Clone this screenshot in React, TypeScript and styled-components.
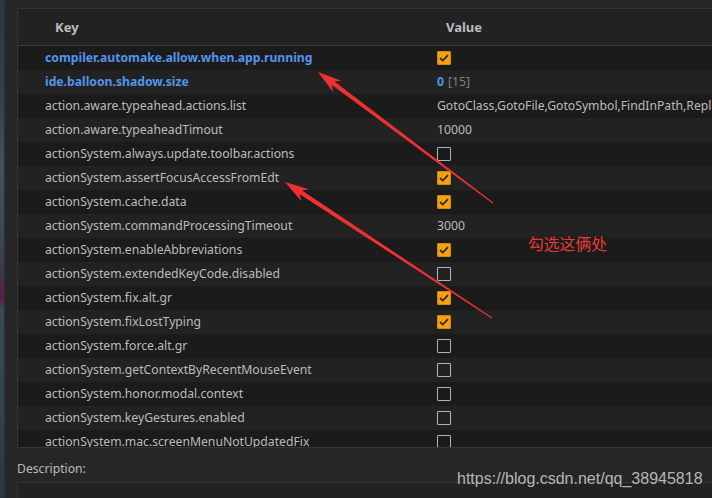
import React from 'react';
import styled, { createGlobalStyle } from 'styled-components';

const GlobalStyle = createGlobalStyle`
  html, body {
    margin: 0;
    padding: 0;
    background: #262626;
    overflow: hidden;
  }
  body {
    font-family: 'Noto Sans', 'Open Sans', sans-serif;
  }
`;

type Value =
  | { kind: 'check'; on: boolean }
  | { kind: 'text'; text: string }
  | { kind: 'size' };

type Row = { key: string; modified?: boolean; value: Value };

const rows: Row[] = [
  { key: 'compiler.automake.allow.when.app.running', modified: true, value: { kind: 'check', on: true } },
  { key: 'ide.balloon.shadow.size', modified: true, value: { kind: 'size' } },
  {
    key: 'action.aware.typeahead.actions.list',
    value: { kind: 'text', text: 'GotoClass,GotoFile,GotoSymbol,FindInPath,ReplaceInPath' },
  },
  { key: 'action.aware.typeaheadTimout', value: { kind: 'text', text: '10000' } },
  { key: 'actionSystem.always.update.toolbar.actions', value: { kind: 'check', on: false } },
  { key: 'actionSystem.assertFocusAccessFromEdt', value: { kind: 'check', on: true } },
  { key: 'actionSystem.cache.data', value: { kind: 'check', on: true } },
  { key: 'actionSystem.commandProcessingTimeout', value: { kind: 'text', text: '3000' } },
  { key: 'actionSystem.enableAbbreviations', value: { kind: 'check', on: true } },
  { key: 'actionSystem.extendedKeyCode.disabled', value: { kind: 'check', on: false } },
  { key: 'actionSystem.fix.alt.gr', value: { kind: 'check', on: true } },
  { key: 'actionSystem.fixLostTyping', value: { kind: 'check', on: true } },
  { key: 'actionSystem.force.alt.gr', value: { kind: 'check', on: false } },
  { key: 'actionSystem.getContextByRecentMouseEvent', value: { kind: 'check', on: false } },
  { key: 'actionSystem.honor.modal.context', value: { kind: 'check', on: false } },
  { key: 'actionSystem.keyGestures.enabled', value: { kind: 'check', on: false } },
  { key: 'actionSystem.mac.screenMenuNotUpdatedFix', value: { kind: 'check', on: false } },
];

const Page = styled.div`
  position: relative;
  display: flex;
  width: 712px;
  height: 498px;
  overflow: hidden;
`;

const Backdrop = styled.div`
  flex: 0 0 4px;
  background: linear-gradient(
    180deg,
    #2c3640 0%,
    #33414c 20%,
    #46505a 34%,
    #3a4650 48%,
    #3c3646 56%,
    #5e1d4c 58%,
    #5a1e48 60%,
    #3a4a52 62%,
    #34444c 80%,
    #2a3540 100%
  );
`;

const Dialog = styled.div`
  flex: 1;
  display: flex;
  flex-direction: column;
  padding: 8px 0 0 12px;
  background: #262626;
  border-left: 1px solid #333;
`;

const Table = styled.div`
  height: 438px;
  border: 1px solid #353535;
  border-right: none;
  background: #1c1c1c;
  overflow: hidden;
  display: flex;
  flex-direction: column;
`;

const HeaderRow = styled.div`
  flex: 0 0 36px;
  display: grid;
  grid-template-columns: 418px 1fr;
  align-items: center;
  background: #222222;
  border-bottom: 1px solid #3b3b3b;
`;

const HeaderCell = styled.div<{ $pad: number }>`
  padding-left: ${(p) => p.$pad}px;
  color: #b9bcc0;
  font-size: 13px;
  font-weight: 700;
`;

const Body = styled.div`
  flex: 1;
  overflow: hidden;
`;

const DataRow = styled.div<{ $odd: boolean }>`
  height: 24px;
  display: grid;
  grid-template-columns: 418px 1fr;
  align-items: center;
  background: ${(p) => (p.$odd ? '#1b1b1b' : '#222222')};
`;

const KeyCell = styled.div<{ $modified?: boolean }>`
  padding-left: 27px;
  padding-bottom: 1px;
  white-space: nowrap;
  font-size: 12.2px;
  font-weight: ${(p) => (p.$modified ? 700 : 400)};
  color: ${(p) => (p.$modified ? '#5394ec' : '#bbbbbb')};
`;

const ValueCell = styled.div`
  padding-left: 1px;
  padding-bottom: 1px;
  white-space: nowrap;
  font-size: 12.2px;
  color: #bbbbbb;
  display: flex;
  align-items: center;
  gap: 4px;
`;

const Strong = styled.span`
  color: #5394ec;
  font-weight: 700;
`;

const Muted = styled.span`
  color: #808080;
`;

const Box = styled.span<{ $on: boolean }>`
  width: 14px;
  height: 14px;
  box-sizing: border-box;
  border-radius: 1px;
  display: inline-flex;
  align-items: center;
  justify-content: center;
  background: ${(p) => (p.$on ? '#f5a00c' : 'transparent')};
  border: 1px solid ${(p) => (p.$on ? '#c98a10' : '#a8b6be')};
`;

const DescLabel = styled.div`
  margin-top: 12px;
  height: 18px;
  font-size: 12.2px;
  color: #b9bcc0;
`;

const DescBox = styled.div`
  margin-top: 4px;
  flex: 1;
  border-top: 1px solid #353535;
  border-left: 1px solid #353535;
  background: #222222;
`;

const Watermark = styled.div`
  position: absolute;
  left: 457px;
  top: 470px;
  font-family: 'Liberation Sans', Arial, sans-serif;
  font-size: 16px;
  color: rgba(220, 220, 220, 0.8);
  white-space: nowrap;
`;

const Note = styled.div`
  position: absolute;
  left: 528px;
  top: 232px;
  font-family: 'Noto Sans CJK SC', sans-serif;
  font-size: 15.8px;
  color: #e83a34;
  white-space: nowrap;
`;

const Overlay = styled.svg`
  position: absolute;
  left: 0;
  top: 0;
  pointer-events: none;
`;

const CheckBox = ({ on }: { on: boolean }) => (
  <Box $on={on}>
    {on && (
      <svg width="10" height="8" viewBox="0 0 10 8">
        <path d="M1 4 L3.8 6.6 L9 1.2" fill="none" stroke="#2a2a2a" strokeWidth="1.8" />
      </svg>
    )}
  </Box>
);

const renderValue = (v: Value) => {
  if (v.kind === 'check') return <CheckBox on={v.on} />;
  if (v.kind === 'size')
    return (
      <>
        <Strong>0</Strong>
        <Muted>[15]</Muted>
      </>
    );
  return <span>{v.text}</span>;
};

// tapered annotation arrow from tail to tip
const arrowPoints = (tx: number, ty: number, px: number, py: number) => {
  const dx = px - tx;
  const dy = py - ty;
  const len = Math.hypot(dx, dy);
  const ux = dx / len;
  const uy = dy / len;
  const nx = -uy;
  const ny = ux;
  const headLen = 24;
  const bx = px - ux * headLen;
  const by = py - uy * headLen;
  const nbx = px - ux * (headLen - 5);
  const nby = py - uy * (headLen - 5);
  const pts = [
    [tx + nx * 0.5, ty + ny * 0.5],
    [nbx + nx * 2.2, nby + ny * 2.2],
    [bx + nx * 7, by + ny * 7],
    [px, py],
    [bx - nx * 7, by - ny * 7],
    [nbx - nx * 2.2, nby - ny * 2.2],
    [tx - nx * 0.5, ty - ny * 0.5],
  ];
  return pts.map((p) => p.map((n) => n.toFixed(1)).join(',')).join(' ');
};

const App = () => (
  <Page>
    <GlobalStyle />
    <Backdrop />
    <Dialog>
      <Table>
        <HeaderRow>
          <HeaderCell $pad={37}>Key</HeaderCell>
          <HeaderCell $pad={10}>Value</HeaderCell>
        </HeaderRow>
        <Body>
          {rows.map((r, i) => (
            <DataRow key={r.key} $odd={i % 2 === 0}>
              <KeyCell $modified={r.modified}>{r.key}</KeyCell>
              <ValueCell>{renderValue(r.value)}</ValueCell>
            </DataRow>
          ))}
        </Body>
      </Table>
      <DescLabel>Description:</DescLabel>
      <DescBox />
    </Dialog>
    <Note>勾选这俩处</Note>
    <Watermark>https://blog.csdn.net/qq_38945818</Watermark>
    <Overlay width="712" height="498" viewBox="0 0 712 498">
      <polygon points={arrowPoints(493, 203, 318, 72)} fill="#ef3030" />
      <polygon points={arrowPoints(492, 318, 285, 182)} fill="#ef3030" />
    </Overlay>
  </Page>
);

export default App;
